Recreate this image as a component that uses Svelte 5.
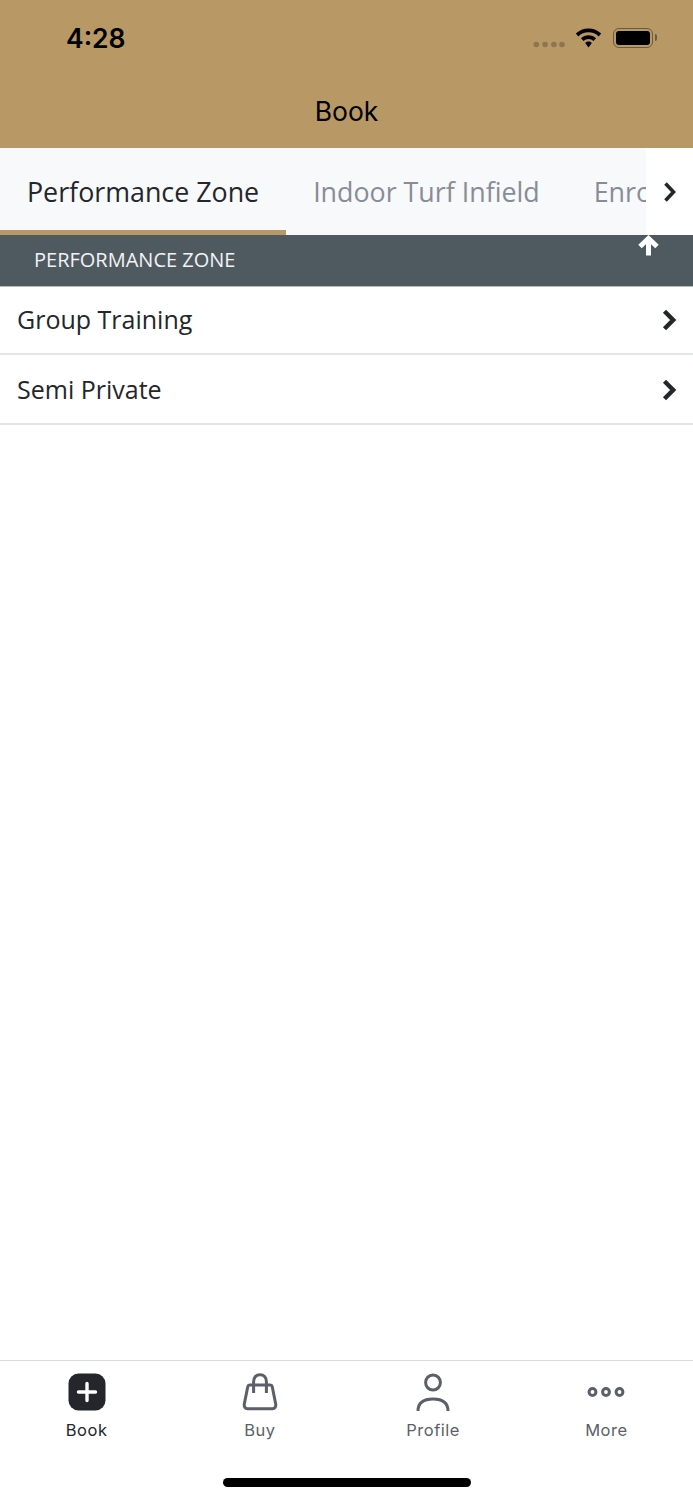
<script>
  const tabs = ['Performance Zone', 'Indoor Turf Infield', 'Enrollment'];
  const rows = ['Group Training', 'Semi Private'];
</script>

<div class="page">
  <header class="top">
    <div class="status">
      <span class="time">4:28</span>
      <div class="indicators">
        <svg class="dots" width="32" height="7" viewBox="0 0 32 7">
          <circle cx="3.300" cy="3.500" r="2.800" /><circle cx="12.100" cy="3.500" r="2.800" /><circle cx="20.900" cy="3.500" r="2.800" /><circle cx="29" cy="3.500" r="2.800" />
        </svg>
        <svg class="wifi" width="27" height="20" viewBox="0 0 27 20">
          <path d="M13.500 0.500C8.600 0.500 4.200 2.400 0.800 5.600L3.300 8.400C6 5.800 9.600 4.300 13.500 4.300C17.400 4.300 21 5.800 23.700 8.400L26.200 5.600C22.800 2.400 18.400 0.500 13.500 0.500Z" />
          <path d="M13.500 7.200C10.600 7.200 8 8.300 6 10.200L8.500 13C9.900 11.700 11.600 11 13.500 11C15.400 11 17.100 11.700 18.500 13L21 10.200C19 8.300 16.400 7.200 13.500 7.200Z" />
          <path d="M13.500 13.600C12.200 13.600 11.100 14.100 10.200 14.900L13.500 19.500L16.800 14.900C15.900 14.100 14.800 13.600 13.500 13.600Z" />
        </svg>
        <div class="battery"><div class="cell"></div><div class="nub"></div></div>
      </div>
    </div>
    <div class="title">Book</div>
  </header>

  <nav class="tabs">
    <div class="tablist">
      {#each tabs as tab, i}
        <div class="tab" class:active={i === 0}>{tab}</div>
      {/each}
    </div>
    <div class="tabnext">
      <svg width="16" height="22" viewBox="0 0 16 22"><path d="M3.500 2.500L11.500 11L3.500 19.500" /></svg>
    </div>
  </nav>

  <div class="section">
    <span>PERFORMANCE ZONE</span>
    <svg class="up" width="23" height="22" viewBox="0 0 23 22"><path d="M11.500 20.500V5M3 11.500L11.500 3.500L20 11.500" /></svg>
  </div>

  <main class="list">
    {#each rows as row}
      <div class="row">
        <span>{row}</span>
        <svg width="16" height="22" viewBox="0 0 16 22"><path d="M3.500 2.200L12.200 11L3.500 19.800" /></svg>
      </div>
    {/each}
  </main>

  <footer class="bar">
    <div class="items">
      <div class="item current">
        <svg width="38" height="38" viewBox="0 0 38 38">
          <rect x="0.500" y="0.500" width="37" height="37" rx="10" fill="#24262b" />
          <path d="M19 10.500V27.500M10.500 19H27.500" stroke="#fff" stroke-width="3.400" stroke-linecap="round" fill="none" />
        </svg>
        <span>Book</span>
      </div>
      <div class="item">
        <svg width="38" height="38" viewBox="0 0 38 38" class="line">
          <path d="M8.500 12H29.500C30.600 12 31 12.600 31.200 13.500L34.700 31C35.100 33.800 33.800 35.700 31.500 35.700H6.500C4.200 35.700 2.900 33.800 3.300 31L6.800 13.500C7 12.600 7.400 12 8.500 12Z" />
          <path d="M12.600 20V8.800C12.600 4.400 15.200 1.800 19 1.800C22.800 1.800 25.400 4.400 25.400 8.800V20" />
        </svg>
        <span>Buy</span>
      </div>
      <div class="item">
        <svg width="38" height="38" viewBox="0 0 38 38" class="line">
          <ellipse cx="19" cy="9.500" rx="7.400" ry="7.600" />
          <path d="M4 38C4 29.500 10 26 19 26C28 26 34 29.500 34 38" />
        </svg>
        <span>Profile</span>
      </div>
      <div class="item">
        <svg width="38" height="38" viewBox="0 0 38 38" class="line">
          <circle cx="5.500" cy="19" r="3.400" /><circle cx="19" cy="19" r="3.400" /><circle cx="32.500" cy="19" r="3.400" />
        </svg>
        <span>More</span>
      </div>
    </div>
    <div class="home"></div>
  </footer>
</div>

<style>
  :global(body) {
    margin: 0;
    background: #fff;
  }
  .page {
    width: 693px;
    height: 1500px;
    display: flex;
    flex-direction: column;
    overflow: hidden;
    font-family: "Open Sans", sans-serif;
    color: #23262b;
  }
  .top {
    height: 148px;
    box-sizing: border-box;
    background: #b89865;
    display: flex;
    flex-direction: column;
    color: #000;
  }
  .status {
    height: 76px;
    display: flex;
    align-items: center;
    justify-content: space-between;
    padding: 0 40px 0 66px;
  }
  .time {
    font-family: Inter, sans-serif;
    font-weight: 600;
    font-size: 26.500px;
    line-height: 1;
  }
  .indicators {
    display: flex;
    align-items: center;
  }
  .dots {
    fill: #8c7650;
    margin: 12px 10px 0 0;
  }
  .wifi {
    fill: #000;
    margin-right: 11px;
  }
  .battery {
    position: relative;
    width: 40px;
    height: 20px;
    box-sizing: border-box;
    border: 1.500px solid #6a5a3e;
    border-radius: 6px;
    padding: 2px;
  }
  .cell {
    height: 100%;
    background: #000;
    border-radius: 3px;
  }
  .nub {
    position: absolute;
    right: -4.500px;
    top: 5px;
    width: 2px;
    height: 7px;
    background: #6a5a3e;
    border-radius: 0 2px 2px 0;
  }
  .title {
    text-align: center;
    font-family: Inter, sans-serif;
    font-size: 26.500px;
    line-height: 36px;
    margin-top: 17px;
  }
  .tabs {
    height: 87px;
    background: #f8f9fb;
    display: flex;
  }
  .tablist {
    width: 646px;
    display: flex;
    overflow: hidden;
  }
  .tab {
    flex: none;
    height: 87px;
    box-sizing: border-box;
    padding: 0 27px;
    font-size: 26.800px;
    line-height: 87px;
    color: #878c97;
    white-space: nowrap;
  }
  .tab.active {
    color: #23262b;
    border-bottom: 5px solid #b89865;
  }
  .tabnext {
    width: 47px;
    background: #fff;
    display: flex;
    align-items: center;
    justify-content: center;
  }
  .tabnext svg path {
    fill: none;
    stroke: #23262b;
    stroke-width: 3.600;
  }
  .section {
    position: relative;
    height: 52px;
    box-sizing: border-box;
    background: #4f5a60;
    border-bottom: 1px solid #b5babd;
    padding-left: 34px;
    font-size: 20px;
    line-height: 49px;
    color: #f2f3f4;
  }
  .up {
    position: absolute;
    left: 637px;
    top: 0;
  }
  .up path {
    fill: none;
    stroke: #fff;
    stroke-width: 5;
  }
  .list {
    flex: 1;
  }
  .row {
    height: 70px;
    box-sizing: border-box;
    padding: 0 16px 0 17px;
    border-bottom: 2px solid #e4e5e7;
    display: flex;
    align-items: center;
    justify-content: space-between;
    font-size: 25px;
  }
  .row:first-child {
    height: 68px;
    padding-bottom: 2px;
  }
  .row svg {
    position: relative;
    top: 1px;
  }
  .row svg path {
    fill: none;
    stroke: #23262b;
    stroke-width: 4.400;
  }
  .bar {
    height: 140px;
    box-sizing: border-box;
    border-top: 1.500px solid #d9d9db;
    display: flex;
    flex-direction: column;
    align-items: center;
    background: #fff;
  }
  .items {
    width: 100%;
    display: grid;
    grid-template-columns: repeat(4, 1fr);
    padding-top: 12px;
  }
  .item {
    display: flex;
    flex-direction: column;
    align-items: center;
    font-family: Inter, sans-serif;
    font-size: 16.500px;
    font-weight: 400;
    line-height: 22px;
    letter-spacing: 0.500px;
    color: #5c5f68;
  }
  .item span {
    margin-top: 8px;
  }
  .item.current {
    color: #24262b;
  }
  .line {
    fill: none;
    stroke: #5c5f68;
    stroke-width: 3;
  }
  .home {
    width: 248px;
    height: 9px;
    background: #000;
    border-radius: 5px;
    margin-top: 37px;
  }
</style>
